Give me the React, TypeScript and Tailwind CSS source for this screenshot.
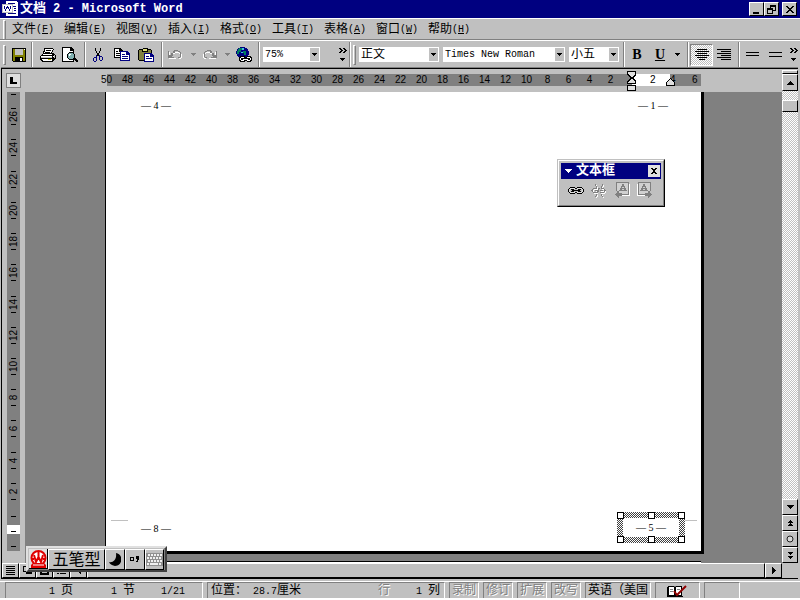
import React from 'react';

const raised = 'border border-t-white border-l-white border-r-black border-b-black bg-[#c0c0c0]';
const dither = 'bg-[conic-gradient(#fff_25%,#c0c0c0_0_50%,#fff_0_75%,#c0c0c0_0)] bg-[length:2px_2px]';
const frameDither = 'bg-[conic-gradient(#fff_25%,#404040_0_50%,#fff_0_75%,#404040_0)] bg-[length:2px_2px]';
const latin = 'text-[10px]';

type IconProps = { w: number; h: number; children: React.ReactNode; className?: string };

function Icon({ w, h, children, className = '' }: IconProps) {
  return (
    <svg
      width={w}
      height={h}
      viewBox={`0 0 ${w} ${h}`}
      shapeRendering="crispEdges"
      aria-hidden="true"
      className={`block shrink-0 ${className}`}
    >
      {children}
    </svg>
  );
}

function Down({ color = '#000' }: { color?: string }) {
  return (
    <Icon w={5} h={3}>
      <path d="M0 0h5v1H0zM1 1h3v1H1zM2 2h1v1H2z" fill={color} />
    </Icon>
  );
}

function Separator() {
  return <span className="h-[25px] w-[2px] shrink-0 border-l border-l-[#808080] border-r border-r-white" />;
}

function Grip() {
  return <span className="h-[20px] w-[3px] shrink-0 border border-t-white border-l-white border-r-[#808080] border-b-[#808080]" />;
}

function ToolButton({ label, className = '', children }: { label: string; className?: string; children: React.ReactNode }) {
  return (
    <button type="button" aria-label={label} className={`flex h-[22px] shrink-0 items-center justify-center ${className}`}>
      {children}
    </button>
  );
}

function Combo({ label, options, className, textClass }: { label: string; options: string[]; className: string; textClass: string }) {
  return (
    <label className={`relative block h-[15px] shrink-0 bg-white ${className}`}>
      <select
        aria-label={label}
        className={`block h-[15px] w-full appearance-none bg-transparent pl-[2px] pr-3 leading-[14px] outline-none ${textClass}`}
      >
        {options.map((o) => (
          <option key={o}>{o}</option>
        ))}
      </select>
      <span className="pointer-events-none absolute inset-y-px right-px flex w-[9px] items-center justify-center bg-[#c0c0c0]">
        <Down />
      </span>
    </label>
  );
}

const menus = [
  ['文件', 'F'],
  ['编辑', 'E'],
  ['视图', 'V'],
  ['插入', 'I'],
  ['格式', 'O'],
  ['工具', 'T'],
  ['表格', 'A'],
  ['窗口', 'W'],
  ['帮助', 'H'],
];

const leftTicks = [50, 48, 46, 44, 42, 40, 38, 36, 34, 32, 30, 28, 26, 24, 22, 20, 18, 16, 14, 12, 10, 8, 6, 4, 2];
const verticalTicks = [26, 24, 22, 20, 18, 16, 14, 12, 10, 8, 6, 4, 2];

function WordLogo() {
  return (
    <Icon w={16} h={16}>
      <path d="M4 0h10l2 2v13H4z" fill="#fff" />
      <path d="M6 2h7v1H6zM11 5h3v1h-3zM12 7h2v1h-2zM12 9h2v1h-2zM6 12h8v1H6z" fill="#000080" />
      <path d="M0 3h11v9H0z" fill="#c0c0c0" />
      <path d="M1 4h9v7H1z" fill="#fff" />
      <path d="M2 5h1v3H2zM3 8h1v2H3zM4 6h1v2H4zM5 5h1v2H5zM6 6h1v2H6zM7 8h1v2H7zM8 5h1v3H8z" fill="#000080" />
    </Icon>
  );
}

function TitleBar() {
  const btn = `flex h-[14px] w-[15px] items-center justify-center ${raised}`;
  return (
    <header className="flex h-[18px] shrink-0 items-center bg-[#000080] pl-[2px] pr-[3px] text-white">
      <WordLogo />
      <h1 className="flex flex-1 items-center gap-[7px] pl-[2px] text-[13px] font-bold leading-[18px]">
        <span>文档</span>
        <span className="whitespace-pre text-xs leading-[18px]">2 - Microsoft Word</span>
      </h1>
      <button type="button" aria-label="最小化" className={btn}>
        <Icon w={9} h={9}>
          <path d="M1 7h6v2H1z" />
        </Icon>
      </button>
      <button type="button" aria-label="还原" className={btn}>
        <Icon w={9} h={9}>
          <path d="M3 0h6v6H6V5h2V2H4v1H3zM0 3h6v6H0zM1 5v3h4V5z" fillRule="evenodd" />
        </Icon>
      </button>
      <button type="button" aria-label="关闭" className={`ml-[3px] ${btn}`}>
        <Icon w={8} h={7}>
          <path d="M0 0h2v1H0zM6 0h2v1H6zM1 1h2v1H1zM5 1h2v1H5zM2 2h4v1H2zM3 3h2v1H3zM2 4h4v1H2zM1 5h2v1H1zM5 5h2v1H5zM0 6h2v1H0zM6 6h2v1H6z" />
        </Icon>
      </button>
    </header>
  );
}

function MenuBar() {
  return (
    <nav className="flex h-[22px] shrink-0 items-end border-t border-t-white pl-[3px]">
      <Grip />
      <ul className="flex pl-px">
        {menus.map(([name, key]) => (
          <li key={key}>
            <button type="button" className="flex h-[20px] w-[52px] items-center justify-center text-xs leading-5">
              <span>{name}</span>
              <span className={`${latin} leading-5`}>
                (<u className="underline-offset-1">{key}</u>)
              </span>
            </button>
          </li>
        ))}
      </ul>
    </nav>
  );
}

function More() {
  return (
    <Icon w={8} h={14}>
      <path d="M0 0h2v1H0zM1 1h2v1H1zM2 2h2v1H2zM1 3h2v1H1zM0 4h2v1H0zM4 0h2v1H4zM5 1h2v1H5zM6 2h2v1H6zM5 3h2v1H5zM4 4h2v1H4zM1 10h5v1H1zM2 11h3v1H2zM3 12h1v1H3z" />
    </Icon>
  );
}

function UndoArrow({ flip = false }: { flip?: boolean }) {
  return (
    <Icon w={14} h={10} className={flip ? '-scale-x-100' : ''}>
      <path d="M1 2h1v6h6v1H1zM7 2h4v1H7zM5 3h2v1H5zM11 3h2v1h-2zM13 4h1v4h-1zM11 8h2v1h-2z" fill="#fff" />
      <path d="M0 1h1v6h5v1H0zM1 5h3v2H1zM3 3h2v3H3zM5 1h2v2H5zM6 0h4v1H6zM10 1h2v1h-2zM12 2h1v5h-1zM10 7h2v1h-2z" fill="#808080" />
    </Icon>
  );
}

function Toolbar() {
  return (
    <div className="flex h-[28px] shrink-0 items-center border-t border-t-white pl-[3px] shadow-[0_-1px_0_#808080]" role="toolbar" aria-label="常用">
      <Grip />
      <ToolButton label="保存" className="w-[25px]">
        <Icon w={14} h={14}>
          <path d="M0 0h14v14H1L0 13z" fill="#000" />
          <path d="M1 1h2v6h8V1h2v12h-2V9H3v4H1z" fill="#808000" />
          <path d="M3 1h8v6H3z" fill="#c0c0c0" />
          <path d="M8 10h2v3H8z" fill="#fff" />
          <path d="M12 1h1v1h-1z" fill="#fff" />
        </Icon>
      </ToolButton>
      <Separator />
      <ToolButton label="打印" className="w-[25px] pl-1">
        <Icon w={16} h={14}>
          <path d="M4 0h9v1h1v1h-1v2h-1v1h2v1h1v1h1v4h-1v1h-1v1h-1v1H2v-1H1v-1H0V8h1V7h1V6h1V3h1z" fill="#000" />
          <path d="M5 1h8v1h-1v2h-1v1H4V4h1z" fill="#fff" />
          <path d="M6 2h5v1H6zM5 4h5v1H5z" fill="#000" />
          <path d="M3 6h9v1H2V7h1zM1 8h11v2H1zM13 8h1v1h-1zM2 11h10v2H3v-1H2z" fill="#fff" />
          <path d="M1 9h11v1H1zM14 7h1v3h-1z" fill="#c0c0c0" />
          <path d="M8 11h3v1H8z" fill="#c0c000" />
        </Icon>
      </ToolButton>
      <ToolButton label="打印预览" className="w-[24px]">
        <Icon w={16} h={15}>
          <path d="M0 0h9l3 3v12H0z" fill="#000" />
          <path d="M1 1h7v3h3v10H1z" fill="#fff" />
          <path d="M7 5h4v1h1v1h1v4h-1v1h-1v1H7v-1H6v-1H5V7h1V6h1z" fill="#000" />
          <path d="M7 6h4v1h1v4h-1v1H7v-1H6V7h1z" fill="#80b0b0" />
          <path d="M7 7h2v1H8v1H7z" fill="#fff" />
          <path d="M12 11h2v1h1v1h1v2h-2v-1h-1v-1h-1z" fill="#000" />
        </Icon>
      </ToolButton>
      <span className="w-[2px]" />
      <Separator />
      <ToolButton label="剪切" className="w-[24px]">
        <Icon w={10} h={14}>
          <path d="M2 0h1v3H2zM3 3h1v2H3zM4 5h2v3H4zM6 3h1v2H6zM7 0h1v3H7z" fill="#000" />
          <path d="M3 7h1v2H3zM6 7h1v2H6zM1 9h3v1H1zM0 10h1v3H0zM1 13h2v1H1zM3 10h1v3H3zM6 8h2v1H6zM6 9h1v3H6zM7 12h2v1H7zM9 9h1v3H9zM8 8h1v1H8z" fill="#000080" />
        </Icon>
      </ToolButton>
      <ToolButton label="复制" className="w-[24px]">
        <Icon w={16} h={13}>
          <path d="M0 0h6l3 3v7H0z" fill="#000" />
          <path d="M1 1h4v3h3v5H1z" fill="#fff" />
          <path d="M2 3h2v1H2zM2 5h4v1H2zM2 7h4v1H2z" fill="#000" />
          <path d="M6 3h7l3 3v7H6z" fill="#000080" />
          <path d="M7 4h5v3h3v5H7z" fill="#fff" />
          <path d="M8 6h3v1H8zM8 8h6v1H8zM8 10h6v1H8z" fill="#000080" />
        </Icon>
      </ToolButton>
      <ToolButton label="粘贴" className="w-[24px]">
        <Icon w={16} h={14}>
          <path d="M1 1h3l1-1h4l1 1h3v1h1v11H1v-1H0V2h1z" fill="#000" />
          <path d="M1 2h12v10H1z" fill="#808040" />
          <path d="M4 1h6v3H4z" fill="#000" />
          <path d="M5 1h4v2H5z" fill="#e0e080" />
          <path d="M6 5h7l3 3v6H6z" fill="#000080" />
          <path d="M7 6h5v3h3v4H7z" fill="#fff" />
          <path d="M8 8h3v1H8zM8 10h6v1H8z" fill="#000080" />
        </Icon>
      </ToolButton>
      <span className="w-[3px]" />
      <Separator />
      <ToolButton label="撤消" className="w-[24px]">
        <UndoArrow />
      </ToolButton>
      <ToolButton label="撤消列表" className="w-[12px]">
        <Down color="#808080" />
      </ToolButton>
      <ToolButton label="恢复" className="w-[22px]">
        <UndoArrow flip />
      </ToolButton>
      <ToolButton label="恢复列表" className="w-[12px]">
        <Down color="#808080" />
      </ToolButton>
      <ToolButton label="插入超链接" className="w-[22px]">
        <Icon w={16} h={15}>
          <path d="M4 0h5v1h2v1h1v2h1v4h-1v2h-2v1H4v-1H2V9H1V7H0V4h1V2h1V1h2z" fill="#000080" />
          <path d="M3 1h3v2H5v2H3v2H1V4h1V2h1zM7 4h3v4H8V6H7z" fill="#008060" />
          <path d="M6 1h2v2H6zM5 5h2v1H5z" fill="#40c0e0" />
          <path d="M4 9h5v1h2V9h4v1h1v4h-1v1h-4v-1H9v1H4v-1H3v-4h1z" fill="#000" />
          <path d="M5 10h3v1H5zM4 11h1v2H4zM5 13h3v1H5zM11 10h3v1h-3zM14 11h1v2h-1zM11 13h3v1h-3zM7 11h5v2H7z" fill="#fff" />
          <path d="M6 11h7v1H6z" fill="#000" />
        </Icon>
      </ToolButton>
      <span className="w-[3px]" />
      <Separator />
      <Combo label="显示比例" options={['75%', '100%']} className="ml-[3px] w-[57px]" textClass="text-[10px]" />
      <ToolButton label="其他按钮" className="ml-[17px] w-[12px]">
        <More />
      </ToolButton>
      <Separator />
      <span className="w-[2px]" />
      <Grip />
      <Combo label="样式" options={['正文', '标题']} className="ml-[3px] w-[80px]" textClass="text-xs" />
      <Combo label="字体" options={['Times New Roman', 'Arial']} className="ml-1 w-[122px]" textClass="text-[10px]" />
      <Combo label="字号" options={['小五', '五号']} className="ml-1 w-[50px]" textClass="text-xs" />
      <span className="w-1" />
      <Separator />
      <ToolButton label="加粗" className="w-[24px] font-['Liberation_Serif',serif] text-[14px] font-bold">
        B
      </ToolButton>
      <ToolButton label="下划线" className="w-[22px] font-['Liberation_Serif',serif] text-[14px] font-bold">
        <u>U</u>
      </ToolButton>
      <ToolButton label="下划线样式" className="w-[12px]">
        <Down />
      </ToolButton>
      <span className="w-[4px]" />
      <Separator />
      <ToolButton label="居中" className={`ml-px w-[23px] border border-t-[#808080] border-l-[#808080] border-r-white border-b-white ${dither}`}>
        <Icon w={14} h={11}>
          <path d="M2 0h10v1H2zM0 2h14v1H0zM2 4h10v1H2zM0 6h14v1H0zM2 8h10v1H2zM4 10h6v1H4z" />
        </Icon>
      </ToolButton>
      <ToolButton label="右对齐" className="w-[22px]">
        <Icon w={14} h={11}>
          <path d="M0 0h14v1H0zM4 2h10v1H4zM0 4h14v1H0zM4 6h10v1H4zM0 8h14v1H0zM4 10h10v1H4z" />
        </Icon>
      </ToolButton>
      <span className="w-[3px]" />
      <Separator />
      <ToolButton label="单倍行距" className="w-[24px]">
        <Icon w={13} h={5}>
          <path d="M0 0h13v1H0zM0 3h13v1H0z" />
        </Icon>
      </ToolButton>
      <ToolButton label="双倍行距" className="w-[22px]">
        <Icon w={13} h={5}>
          <path d="M0 0h13v1H0zM0 4h13v1H0z" />
        </Icon>
      </ToolButton>
      <ToolButton label="其他格式按钮" className="ml-auto w-[12px]">
        <More />
      </ToolButton>
    </div>
  );
}

function HorizontalRuler() {
  const cell = 'w-[21px] shrink-0 text-center';
  return (
    <div className="flex h-[23px] shrink-0 pt-1 font-['Liberation_Sans',sans-serif] text-[10px] leading-3">
      <button type="button" aria-label="制表符" className="ml-1 h-[15px] w-[15px] border border-[#808080] bg-[#dfdfdf]">
        <Icon w={13} h={13}>
          <path d="M3 3h3v5h4v2H3z" />
        </Icon>
      </button>
      <div className="ml-[75px] mt-px flex h-3 bg-[linear-gradient(90deg,#c0c0c0_11px,#808080_11px)]">
        {leftTicks.map((n) => (
          <span key={n} className={cell}>
            {n}
          </span>
        ))}
        <span className="relative w-[11px]">
          <Icon w={11} h={21} className="absolute -top-[3px] left-[5px]">
            <path d="M1 0h9v4L6 8h-1L1 4zM5 6h1l4 4v3H1v-3zM1 14h9v6H1z" fill="#000" />
            <path d="M2 1h7v2L6 6H5L2 3zM5 8h1l3 3v1H2v-1zM2 15h7v4H2z" fill="#e0e0e0" />
          </Icon>
        </span>
        <span className="w-[38px] bg-white pl-[18px]">2</span>
        <span className="relative w-[10px]">
          4
          <Icon w={9} h={8} className="absolute -left-[4px] top-1">
            <path d="M4 0h1v1h1v1h1v1h1v1h1v4H0V4h1V3h1V2h1V1h1z" fill="#000" />
            <path d="M4 1h1v1h1v1h1v1h1v3H1V4h1V3h1V2h1z" fill="#dfdfdf" />
          </Icon>
        </span>
        <span className="w-[21px] pl-[12px]">6</span>
      </div>
    </div>
  );
}

function Tick() {
  return <span className="h-px w-[5px] shrink-0 bg-black" />;
}

function VerticalRuler() {
  return (
    <div className="flex w-[13px] flex-col items-center self-stretch font-['Liberation_Sans',sans-serif] text-[10px]">
      <div className="flex w-full flex-1 flex-col items-center bg-[#808080] pt-[2px]">
        <Tick />
        <div className="flex w-full flex-1 flex-col items-center pt-[6px]">
          {verticalTicks.map((n) => (
            <div key={n} className="flex w-full flex-1 flex-col items-center justify-center">
              <Tick />
              <span className="flex h-[15px] w-full items-center justify-center">
                <span className="-rotate-90 leading-[13px]">{n}</span>
              </span>
              <Tick />
            </div>
          ))}
        </div>
        <span className="flex h-[18px] items-center">
          <Tick />
        </span>
      </div>
      <div className="flex h-[9px] w-full items-center justify-center bg-white pt-[3px]">
        <Tick />
      </div>
      <div className="flex h-[17px] w-full items-center justify-center bg-[#808080] pt-[7px]">
        <Tick />
      </div>
      <div className="h-[12px]" />
    </div>
  );
}

const handlePlaces = [
  'left-0 top-0',
  'left-[31px] top-0',
  'right-0 top-0',
  'left-0 bottom-0',
  'left-[31px] bottom-0',
  'right-0 bottom-0',
];

function PageNumber({ n }: { n: number }) {
  return <p className="whitespace-nowrap font-['Liberation_Serif',serif] text-[10px] leading-3">— {n} —</p>;
}

function Page() {
  return (
    <article className="ml-[80px] mr-[78px] flex flex-1 flex-col border-b-3 border-l border-r-3 border-black bg-white">
      <div className="flex justify-between pl-[35px] pr-[33px] pt-2">
        <PageNumber n={4} />
        <PageNumber n={1} />
      </div>
      <div className="flex-1" />
      <div className="flex items-start justify-between pb-2 pl-[5px] pr-1">
        <div className="flex pt-2">
          <span className="h-px w-[17px] bg-[#c0c0c0]" />
          <div className="pl-[13px] pt-[3px]">
            <PageNumber n={8} />
          </div>
        </div>
        <div className="flex">
          <div className={`relative h-[31px] w-[68px] p-[6px] ${frameDither}`}>
            <div className="flex h-full items-center justify-center bg-white">
              <PageNumber n={5} />
            </div>
            {handlePlaces.map((place) => (
              <span key={place} className={`absolute h-[7px] w-[7px] border border-black bg-white ${place}`} />
            ))}
          </div>
          <span className="mt-2 h-px w-3 bg-[#c0c0c0]" />
        </div>
      </div>
    </article>
  );
}

function ScrollButton({ label, children, className = 'h-4' }: { label: string; children: React.ReactNode; className?: string }) {
  return (
    <button type="button" aria-label={label} className={`flex w-full shrink-0 items-center justify-center ${raised} ${className}`}>
      {children}
    </button>
  );
}

function VerticalScrollbar() {
  return (
    <div className="flex w-4 shrink-0 flex-col">
      <div className={`mt-px h-1 shrink-0 ${raised}`} />
      <ScrollButton label="向上滚动" className="h-[17px]">
        <Icon w={7} h={4}>
          <path d="M3 0h1v1H3zM2 1h3v1H2zM1 2h5v1H1zM0 3h7v1H0z" />
        </Icon>
      </ScrollButton>
      <div className={`flex-1 pt-[9px] ${dither}`}>
        <div className={`h-3 ${raised}`} />
      </div>
      <ScrollButton label="向下滚动">
        <Icon w={7} h={4}>
          <path d="M0 0h7v1H0zM1 1h5v1H1zM2 2h3v1H2zM3 3h1v1H3z" />
        </Icon>
      </ScrollButton>
      <ScrollButton label="前一页">
        <Icon w={5} h={7}>
          <path d="M2 0h1v1H2zM1 1h3v1H1zM0 2h5v1H0zM2 3h1v1H2zM1 4h3v1H1zM0 5h5v1H0z" />
        </Icon>
      </ScrollButton>
      <ScrollButton label="选择浏览对象">
        <svg width="8" height="8" viewBox="0 0 8 8" aria-hidden="true">
          <circle cx="4" cy="4" r="3" fill="#d8d8d8" stroke="#202020" />
        </svg>
      </ScrollButton>
      <ScrollButton label="下一页">
        <Icon w={5} h={7}>
          <path d="M0 0h5v1H0zM1 1h3v1H1zM2 2h1v1H2zM0 4h5v1H0zM1 5h3v1H1zM2 6h1v1H2z" />
        </Icon>
      </ScrollButton>
    </div>
  );
}

function BottomBar() {
  const view = `flex h-[15px] w-[17px] shrink-0 items-center justify-center ${raised}`;
  return (
    <div className="flex h-[16px] shrink-0 border-b border-black pr-4">
      <button type="button" aria-label="普通视图" className={view}>
        <Icon w={9} h={9}>
          <path d="M0 0h9v1H0zM0 2h9v1H0zM0 4h9v1H0zM0 6h9v1H0zM0 8h9v1H0z" />
        </Icon>
      </button>
      <button type="button" aria-label="Web 版式视图" className={view}>
        <Icon w={9} h={9}>
          <path d="M0 0h6v2h3v6H3V6H0zM1 1v4h2V3h3V1z" fillRule="evenodd" />
        </Icon>
      </button>
      <button type="button" aria-label="页面视图" className={view}>
        <Icon w={9} h={9}>
          <path d="M0 0h9v9H0zM2 2v5h5V2z" fillRule="evenodd" />
          <path d="M3 5h3v1H3z" />
        </Icon>
      </button>
      <button type="button" aria-label="大纲视图" className={view}>
        <Icon w={9} h={9}>
          <path d="M0 1h2v1H0zM3 1h6v1H3zM2 4h7v1H2zM0 7h2v1H0zM3 7h6v1H3z" />
        </Icon>
      </button>
      <button type="button" aria-label="向左滚动" className={view}>
        <Icon w={4} h={7}>
          <path d="M3 0h1v7H3zM2 1h1v5H2zM1 2h1v3H1zM0 3h1v1H0z" />
        </Icon>
      </button>
      <div className={`flex-1 ${raised}`} />
      <button type="button" aria-label="向右滚动" className={view}>
        <Icon w={4} h={7}>
          <path d="M0 0h1v7H0zM1 1h1v5H1zM2 2h1v3H2zM3 3h1v1H3z" />
        </Icon>
      </button>
    </div>
  );
}

const panel = 'flex h-[16px] shrink-0 items-center border-l border-t border-r border-l-[#808080] border-t-[#808080] border-r-white pt-[2px] text-xs leading-[13px]';
const disabledText = 'text-[#808080] [text-shadow:1px_1px_0_#fff]';

function StatusBar() {
  return (
    <footer className="flex h-[17px] shrink-0 items-start border-t border-t-white bg-[#c0c0c0] pl-[5px]">
      <div className={`${panel} w-[198px] pl-[43px]`}>
        <span className="flex w-[62px] gap-[6px]">
          <span className={latin}>1</span>页
        </span>
        <span className="flex w-[50px] gap-[6px]">
          <span className={latin}>1</span>节
        </span>
        <span className={latin}>1/21</span>
      </div>
      <div className={`${panel} ml-1 w-[238px] pl-[3px]`}>
        <span className="w-[42px]">位置：</span>
        <span className={latin}>28.7</span>
        <span>厘米</span>
        <span className={`ml-auto mr-[26px] ${disabledText}`}>行</span>
        <span className="flex gap-[6px] pr-1">
          <span className={latin}>1</span>列
        </span>
      </div>
      <div className="ml-1 flex gap-1">
        {['录制', '修订', '扩展', '改写'].map((t) => (
          <div key={t} className={`${panel} w-[30px] justify-center ${disabledText}`}>
            {t}
          </div>
        ))}
      </div>
      <div className={`${panel} ml-1 w-[66px] overflow-hidden whitespace-nowrap pl-[2px]`}>英语（美国</div>
      <div className={`${panel} ml-1 w-[45px] pl-[11px]`}>
        <svg width="20" height="13" viewBox="0 0 20 13" aria-hidden="true">
          <path d="M1 1h6l1 1 1-1h6v10h1v1H0V2h1z" fill="#000" />
          <path d="M2 2h5v8H2zM9 2h5v8H9z" fill="#fff" />
          <path d="M3 4h3v1H3zM3 6h3v1H3zM10 4h3v1h-3z" fill="#808080" />
          <path d="M7 6l3 4 9-9" fill="none" stroke="#900000" strokeWidth="2" />
        </svg>
      </div>
      <div className={`${panel} ml-1 w-[36px]`} />
    </footer>
  );
}

function TextBoxToolbar() {
  return (
    <section
      aria-label="文本框"
      className="absolute right-[135px] top-[159px] h-[48px] w-[108px] border border-r-black border-b-black border-t-[#c0c0c0] border-l-[#c0c0c0] bg-[#c0c0c0]"
    >
      <div className="h-full border border-t-white border-l-white border-r-[#808080] border-b-[#808080] p-[2px]">
        <div className="flex h-4 items-center bg-[#000080] pl-1 pr-px text-white">
          <Icon w={7} h={4}>
            <path d="M0 0h7v1H0zM1 1h5v1H1zM2 2h3v1H2zM3 3h1v1H3z" fill="#fff" />
          </Icon>
          <h2 className="flex-1 pl-1 text-[13px] font-bold leading-4">文本框</h2>
          <button type="button" aria-label="关闭工具栏" className="flex h-3 w-3 items-center justify-center bg-[#e0e0e0]">
            <Icon w={6} h={6}>
              <path d="M0 0h2v1h2V0h2v1H5v1H4v2h1v1h1v1H4V5H2v1H0V5h1V4h1V2H1V1H0z" />
            </Icon>
          </button>
        </div>
        <div className="flex">
          <ToolButton label="创建文本框链接" className="ml-[3px] w-[23px]">
            <Icon w={16} h={7}>
              <path d="M2 0h5v1H2zM1 1h1v1H1zM0 2h1v3H0zM1 5h1v1H1zM2 6h5v1H2zM9 0h5v1H9zM14 1h1v1h-1zM15 2h1v3h-1zM14 5h1v1h-1zM9 6h5v1H9zM7 1h2v1H7zM7 5h2v1H7zM3 2h3v1H3zM3 4h3v1H3zM10 2h3v1h-3zM10 4h3v1h-3zM4 3h8v1H4z" />
              <path d="M2 1h5v1H2zM9 1h5v1H9zM1 2h1v3H1zM14 2h1v3h-1zM2 5h5v1H2zM9 5h5v1H9z" fill="#e0e0e0" />
            </Icon>
          </ToolButton>
          <ToolButton label="断开向前链接" className="w-[23px]">
            <Icon w={17} h={15}>
              <path
                d="M5 1h1v2H5zM6 3h1v2H6zM12 1h1v2h-1zM11 3h1v2h-1zM3 5h4v1H3zM2 6h1v3H2zM3 9h4v1H3zM11 5h3v1h-3zM14 6h1v3h-1zM10 9h4v1h-4zM5 7h3v1H5zM10 7h3v1h-3zM6 11h1v2H6zM5 13h1v1H5zM11 11h1v2h-1zM12 13h1v1h-1z"
                fill="#fff"
                transform="translate(1 1)"
              />
              <path
                d="M5 1h1v2H5zM6 3h1v2H6zM12 1h1v2h-1zM11 3h1v2h-1zM3 5h4v1H3zM2 6h1v3H2zM1 7h1v1H1zM3 9h4v1H3zM11 5h3v1h-3zM14 6h1v3h-1zM15 7h1v1h-1zM10 9h4v1h-4zM5 7h3v1H5zM10 7h3v1h-3zM6 11h1v2H6zM5 13h1v1H5zM11 11h1v2h-1zM12 13h1v1h-1zM8 5l2 0l-2 5h-1z"
                fill="#808080"
              />
            </Icon>
          </ToolButton>
          <ToolButton label="前一文本框" className="w-[23px]">
            <LetterBox />
          </ToolButton>
          <ToolButton label="下一文本框" className="w-[23px]">
            <LetterBox flip />
          </ToolButton>
        </div>
      </div>
    </section>
  );
}

function LetterBox({ flip = false }: { flip?: boolean }) {
  return (
    <Icon w={16} h={16} className={flip ? '-scale-x-100' : ''}>
      <path d="M4 2h12v12H4z" fill="#fff" />
      <path d="M2 0h13v1H2zM2 0h1v9H2zM14 0h1v13h-1zM7 12h8v1H7z" fill="#808080" />
      <path d="M3 1h11v11H3z" fill="#d0d0d0" />
      <path d="M8 2h2v2h1v2h1v2h1v1h-4V8h1V7H8v1h1v1H5V8h1V6h1V4h1zM8 5v1h2V5z" fill="#808080" />
      <path d="M3 9h2v2h3v3H5v2H4v-1H3v-1H2v-1H1v-1h1v-1h1z" fill="#808080" />
    </Icon>
  );
}

function ImeBar() {
  const cell = `flex h-[21px] items-center justify-center ${raised}`;
  return (
    <section
      aria-label="输入法"
      className="absolute bottom-[26px] left-[26px] flex h-[26px] w-[141px] border-2 border-t-[#e0e0e0] border-l-[#e0e0e0] border-r-[#404040] border-b-[#404040] bg-[#c0c0c0] p-px shadow-[inset_-1px_-1px_0_#808080]"
    >
      <button type="button" aria-label="王码" className="flex h-[20px] w-[19px] items-center justify-center border-b border-r border-black bg-[#e0e0e0]">
        <svg width="17" height="18" viewBox="0 0 17 18" aria-hidden="true">
          <circle cx="8.500" cy="8" r="7" fill="#fff" stroke="#e00000" strokeWidth="2" />
          <path d="M3 13h11l2 2v3H1v-3z" fill="#e00000" />
          <path d="M4 5l2 7 2.500-5 2.500 5 2-7M8.500 1v6M1 9h3M13 9h3" fill="none" stroke="#e00000" strokeWidth="2" />
          <path d="M3 15h11" stroke="#fff" />
        </svg>
      </button>
      <button type="button" className={`${cell} w-[57px] pt-[2px] text-base leading-5`}>
        五笔型
      </button>
      <button type="button" aria-label="半角" className={`${cell} w-5`}>
        <svg width="12" height="13" viewBox="0 0 12 13" aria-hidden="true">
          <path d="M7 0a6.500 6.500 0 1 1-7 9c4 1 8-2 7-9z" />
        </svg>
      </button>
      <button type="button" aria-label="中文标点" className={`${cell} w-5`}>
        <Icon w={10} h={7}>
          <path d="M0 1h4v4H0zM1 2v2h2V2z" fillRule="evenodd" />
          <path d="M6 0h3v4H8v2H6V5h1V3H6z" />
        </Icon>
      </button>
      <button type="button" aria-label="软键盘" className={`${cell} flex-1`}>
        <Icon w={17} h={13}>
          <path d="M0 0h17v13H0z" fill="#909090" />
          <path d="M2 1h2v2H2zM5 1h2v2H5zM8 1h2v2H8zM11 1h2v2h-2zM14 1h2v2h-2zM1 4h2v2H1zM4 4h2v2H4zM7 4h2v2H7zM10 4h2v2h-2zM13 4h2v2h-2zM2 7h2v2H2zM5 7h2v2H5zM8 7h2v2H8zM11 7h2v2h-2zM14 7h2v2h-2zM1 10h2v2H1zM4 10h8v2H4zM13 10h2v2h-2z" fill="#f0f0f0" />
        </Icon>
      </button>
    </section>
  );
}

export default function App() {
  return (
    <div className="h-screen w-full bg-white pb-[2px] font-['Liberation_Mono','Noto_Sans_CJK_SC',monospace] text-black">
      <div className="relative flex h-full flex-col bg-[#c0c0c0]">
        <TitleBar />
        <MenuBar />
        <Toolbar />
        <main className="ml-px mr-[2px] flex min-h-0 flex-1 flex-col border-l border-t border-black shadow-[0_-1px_0_#808080]">
          <div className="flex min-h-0 flex-1">
            <div className="flex min-w-0 flex-1 flex-col">
              <HorizontalRuler />
              <div className="flex min-h-0 flex-1 pl-[5px]">
                <VerticalRuler />
                <div className="ml-[5px] flex min-w-0 flex-1 flex-col bg-[#808080]">
                  <Page />
                  <div className="ml-[80px] mr-[81px] mt-[7px] h-[2px] border-t border-black bg-white" />
                </div>
              </div>
            </div>
            <VerticalScrollbar />
          </div>
          <BottomBar />
        </main>
        <div className="h-[2px] shrink-0" />
        <StatusBar />
        <TextBoxToolbar />
        <ImeBar />
      </div>
    </div>
  );
}
